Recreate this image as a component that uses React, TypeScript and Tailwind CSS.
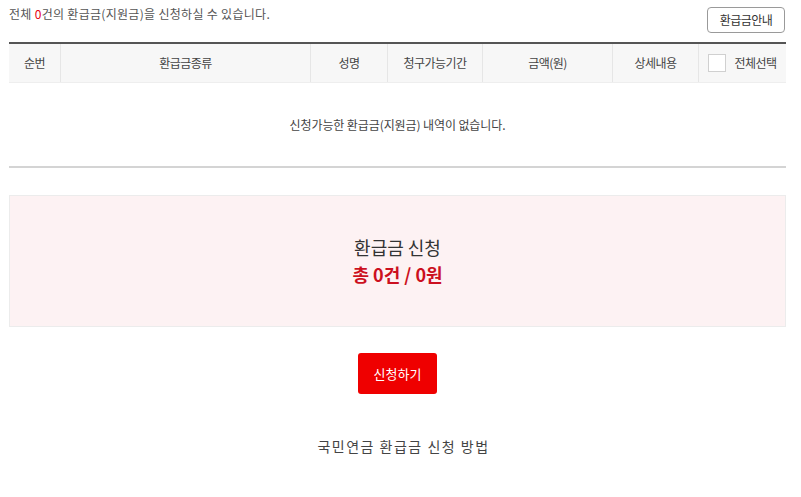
import React from "react";

const font = { fontFamily: '"Noto Sans CJK KR", "Noto Sans", sans-serif' };

export default function App() {
  const headers = ["순번", "환급금종류", "성명", "청구가능기간", "금액(원)", "상세내용"];
  return (
    <div className="h-[497px] w-[801px] bg-white" style={font}>
      <div className="w-[795px] pl-[9px] text-[#333]">
        <div className="flex h-[42px] w-[777px] items-start justify-between">
          <p className="mt-[5px] text-[12px] tracking-[0.3px] text-[#555]">
            전체 <span className="text-[#e60012]">0</span>건의 환급금(지원금)을 신청하실 수 있습니다.
          </p>
          <button className="mt-[7px] mr-[1px] h-[26px] w-[78px] rounded-[4px] border border-[#9a9a9a] bg-white text-[12px] tracking-[-0.5px] text-[#333]">
            환급금안내
          </button>
        </div>
        <div className="w-[777px] border-t-2 border-[#555]">
          <div className="grid h-[39px] grid-cols-[51px_250px_77px_95px_130px_86px_88px] border-b border-[#eee] bg-[#f7f7f7] text-[12px] tracking-[-0.5px] text-[#444]">
            {headers.map((h, i) => (
              <div key={h} className={`flex items-center justify-center ${i > 0 ? "border-l border-[#e6e6e6]" : ""}`}>
                {h}
              </div>
            ))}
            <div className="flex items-center justify-center gap-[8px] border-l border-[#e6e6e6]">
              <span className="h-[18px] w-[18px] border border-[#d0d0d0] bg-white" />
              <span>전체선택</span>
            </div>
          </div>
          <div className="flex h-[85px] items-center justify-center border-b-2 border-[#d4d4d4] text-[12px] tracking-[-0.1px] text-[#444]">
            신청가능한 환급금(지원금) 내역이 없습니다.
          </div>
        </div>
        <div className="mt-[27px] flex h-[132px] w-[777px] flex-col items-center justify-center border border-[#ececec] bg-[#fdf2f3]">
          <div className="text-[18px] leading-[27px] text-[#333]">환급금 신청</div>
          <div className="text-[18px] font-bold leading-[27px] text-[#cc1020]">총 0건 / 0원</div>
        </div>
        <div className="mt-[26px] flex w-[777px] justify-center">
          <button className="h-[41px] w-[79px] rounded-[3px] bg-[#ef0000] text-[13px] text-white">신청하기</button>
        </div>
        <div className="mt-[42px] w-[777px] pl-[12px] text-center text-[14px] tracking-[1.5px] text-[#444]">
          국민연금 환급금 신청 방법
        </div>
      </div>
    </div>
  );
}
